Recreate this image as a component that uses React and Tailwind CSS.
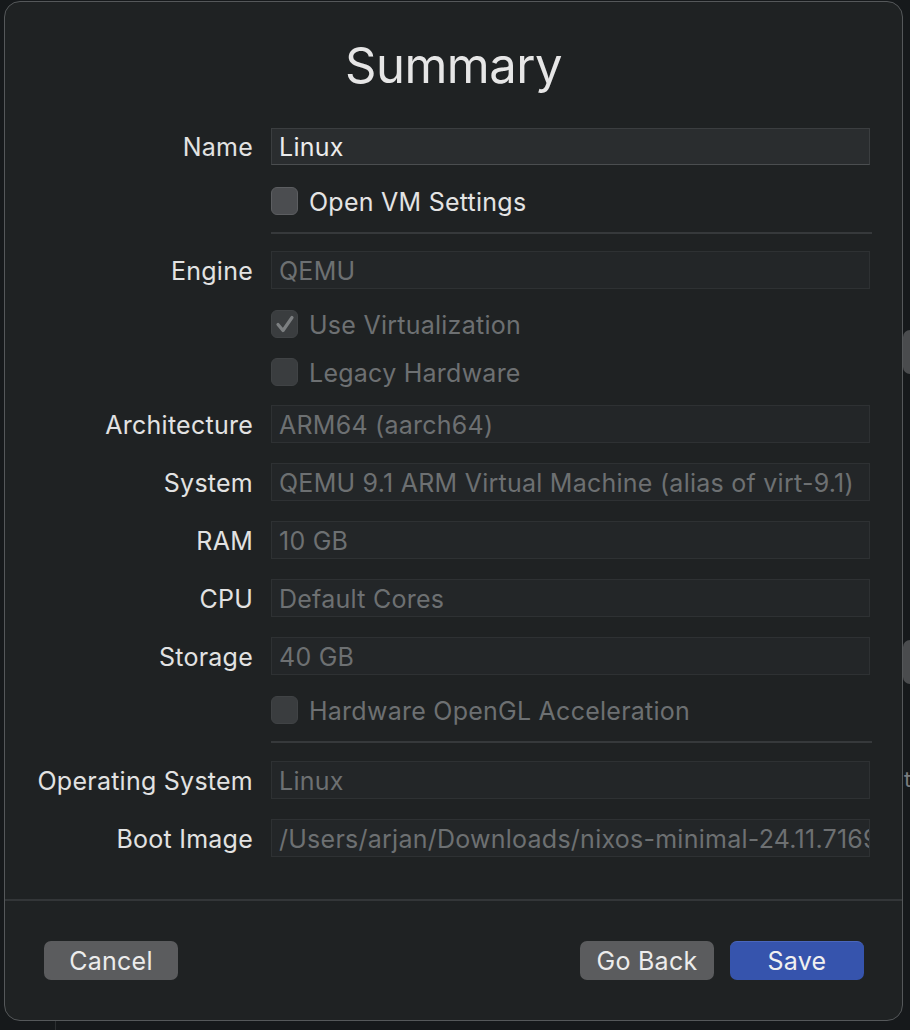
import React from 'react';

const font = { fontFamily: 'Inter, "Liberation Sans", Arial, sans-serif' };

function Field({ value }) {
  return (
    <div className="h-[38px] flex items-center pl-[7px] pt-[1px] overflow-hidden whitespace-nowrap border bg-[#232628] border-[#2e3133] text-[#6d7072]">
      {value}
    </div>
  );
}

function Checkbox({ label, checked, active }) {
  return (
    <div className="flex items-center gap-[11px] h-[28px]">
      <div
        className={
          'w-[27px] h-[28px] rounded-[6px] flex items-center justify-center border ' +
          (active ? 'bg-[#4b4d50] border-[#5c5e61]' : 'bg-[#3a3d3f] border-[#404345]')
        }
      >
        {checked && (
          <svg width="22" height="22" viewBox="0 0 22 22">
            <path d="M4 11.5 L9 17.5 L18 4.5" fill="none" stroke="#7c7f81" strokeWidth="3.2" strokeLinecap="round" strokeLinejoin="round" />
          </svg>
        )}
      </div>
      <span className={'pt-[1px] ' + (active ? 'text-[#e4e4e4]' : 'text-[#6d7072]')}>{label}</span>
    </div>
  );
}

function Row({ label, children, className = '' }) {
  return (
    <div className={'grid grid-cols-[248px_599px] gap-x-[18px] items-center ' + className}>
      <div className="text-right text-[#e2e2e2] pt-[1px] whitespace-nowrap">{label}</div>
      <div>{children}</div>
    </div>
  );
}

export default function App() {
  return (
    <div className="w-[910px] h-[1030px] bg-[#16191b] relative overflow-hidden text-[25px] leading-[30px] tracking-[0.25px]" style={font}>
      {/* window behind the sheet */}
      <div className="absolute left-[55px] top-[1020px] w-px h-[10px] bg-[#2c2f31]" />
      <div className="absolute left-[903px] top-[330px] w-[14px] h-[44px] rounded-full bg-[#4a4c4e]" />
      <div className="absolute left-[903px] top-[640px] w-[14px] h-[44px] rounded-full bg-[#4a4c4e]" />
      <div className="absolute left-[904px] top-[764px] text-[22px] text-[#7a7c7e]">t</div>

      <div className="ml-[4px] mt-[1px] w-[899px] h-[1020px] rounded-[16px] border border-[#55585a] bg-[#1f2223] relative flex flex-col">
        <div className="h-[126px] flex items-center justify-center">
          <h1 className="text-[49px] text-[#e6e6e6] leading-none tracking-[-0.5px]">Summary</h1>
        </div>

        <Row label="Name" className="h-[37px]">
          <div className="h-[37px] flex items-center pl-[7px] pt-[1px] bg-[#2a2d2f] border border-[#3b3e40] border-b-[#4b4e50] text-[#ececec]">
            Linux
          </div>
        </Row>

        <Row label="" className="mt-[22px]">
          <Checkbox label="Open VM Settings" active />
        </Row>

        <Row label="" className="mt-[17px]">
          <div className="h-[2px] w-[601px] bg-[#36393b]" />
        </Row>

        <Row label="Engine" className="mt-[17px]">
          <Field value="QEMU" />
        </Row>

        <Row label="" className="mt-[21px]">
          <Checkbox label="Use Virtualization" checked />
        </Row>

        <Row label="" className="mt-[20px]">
          <Checkbox label="Legacy Hardware" />
        </Row>

        <Row label="Architecture" className="mt-[19px]">
          <Field value="ARM64 (aarch64)" />
        </Row>
        <Row label="System" className="mt-[20px]">
          <Field value="QEMU 9.1 ARM Virtual Machine (alias of virt-9.1)" />
        </Row>
        <Row label="RAM" className="mt-[20px]">
          <Field value="10 GB" />
        </Row>
        <Row label="CPU" className="mt-[20px]">
          <Field value="Default Cores" />
        </Row>
        <Row label="Storage" className="mt-[20px]">
          <Field value="40 GB" />
        </Row>

        <Row label="" className="mt-[21px]">
          <Checkbox label="Hardware OpenGL Acceleration" />
        </Row>

        <Row label="" className="mt-[17px]">
          <div className="h-[2px] w-[601px] bg-[#36393b]" />
        </Row>

        <Row label="Operating System" className="mt-[18px]">
          <Field value="Linux" />
        </Row>
        <Row label="Boot Image" className="mt-[20px]">
          <Field value="/Users/arjan/Downloads/nixos-minimal-24.11.716925.a1b2c3d4-aarch64-linux.iso" />
        </Row>

        <div className="mt-[42px] h-[2px] bg-[#333638]" />

        <div className="mt-[40px] flex items-center pl-[39px] pr-[38px]">
          <button className="w-[134px] h-[39px] rounded-[7px] bg-[#5b5c5e] text-[#ececec]">Cancel</button>
          <div className="flex-1" />
          <button className="w-[134px] h-[39px] rounded-[7px] bg-[#5b5c5e] text-[#ececec]">Go Back</button>
          <button className="ml-[16px] w-[134px] h-[39px] rounded-[7px] bg-[#3654ad] border-t border-[#4a66bd] text-[#f0f0f0]">Save</button>
        </div>
      </div>
    </div>
  );
}
